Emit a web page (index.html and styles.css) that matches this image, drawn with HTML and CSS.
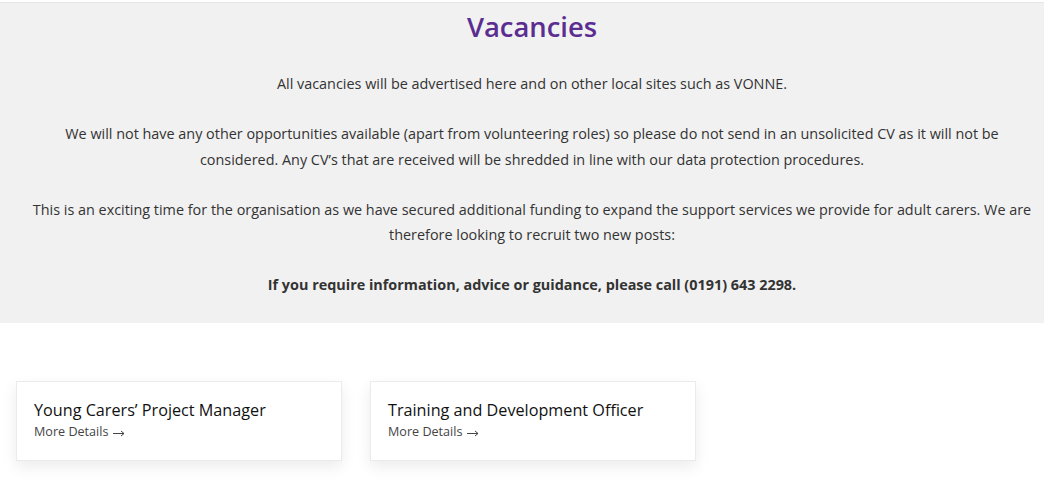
FILE: index.html
```html
<!DOCTYPE html>
<html lang="en">
<head>
  <meta charset="UTF-8" />
  <meta name="viewport" content="width=device-width, initial-scale=1.0" />
  <title>Vacancies</title>
  <link rel="stylesheet" href="styles.css">
</head>
<body>
  <section class="intro">
    <h1>Vacancies</h1>
    <p>All vacancies will be advertised here and on other local sites such as VONNE.</p>
    <p>We will not have any other opportunities available (apart from volunteering roles) so please do not send in an unsolicited CV as it will not be considered. Any CV’s that are received will be shredded in line with our data protection procedures.</p>
    <p>This is an exciting time for the organisation as we have secured additional funding to expand the support services we provide for adult carers. We are therefore looking to recruit two new posts:</p>
    <p><strong>If you require information, advice or guidance, please call (0191) 643 2298.</strong></p>
  </section>

  <div class="jobs">
    <a class="job-card" href="#">
      <h3>Young Carers’ Project Manager</h3>
      <span class="more">More Details
        <svg class="arrow" width="12" height="8" viewBox="0 0 12 8"><path d="M0 4.5h11M8 2l3 2.5L8 7" fill="none" stroke="#444" stroke-width="1"/></svg>
      </span>
    </a>
    <a class="job-card" href="#">
      <h3>Training and Development Officer</h3>
      <span class="more">More Details
        <svg class="arrow" width="12" height="8" viewBox="0 0 12 8"><path d="M0 4.5h11M8 2l3 2.5L8 7" fill="none" stroke="#444" stroke-width="1"/></svg>
      </span>
    </a>
  </div>
</body>
</html>
```

FILE: styles.css
```css
* {
  box-sizing: border-box;
}
body {
  margin: 0;
  padding-top: 2px;
  font-family: "Open Sans", Arial, sans-serif;
  color: #333;
  background: white;
}
.intro {
  background-color: #f1f1f1;
  border-top: 1px solid #e6e6e6;
  padding: 4px 10px 1px 30px;
  text-align: center;
  font-size: 14.4px;
  line-height: 25.5px;
}
.intro h1 {
  margin: 0 0 24px;
  font-size: 27.4px;
  line-height: 40px;
  font-weight: 600;
  color: #5c2d91;
}
.intro p {
  margin: 0;
  padding-bottom: 24.5px;
}
.intro strong {
  font-weight: 700;
}
.jobs {
  display: flex;
  gap: 28px;
  padding: 58px 16px 30px;
}
.job-card {
  display: block;
  width: 326px;
  height: 80px;
  padding: 17px 17px 0;
  background: white;
  border: 1px solid #ebebeb;
  box-shadow: 0 6px 14px rgba(0,0,0,0.08);
  text-decoration: none;
  color: #222;
}
.job-card h3 {
  margin: 0;
  font-size: 16.2px;
  line-height: 22px;
  font-weight: 400;
  color: #111;
}
.job-card .more {
  display: block;
  font-size: 12.6px;
  line-height: 22px;
  color: #444;
}
.job-card .arrow {
  vertical-align: middle;
  margin-left: 1px;
}
```
